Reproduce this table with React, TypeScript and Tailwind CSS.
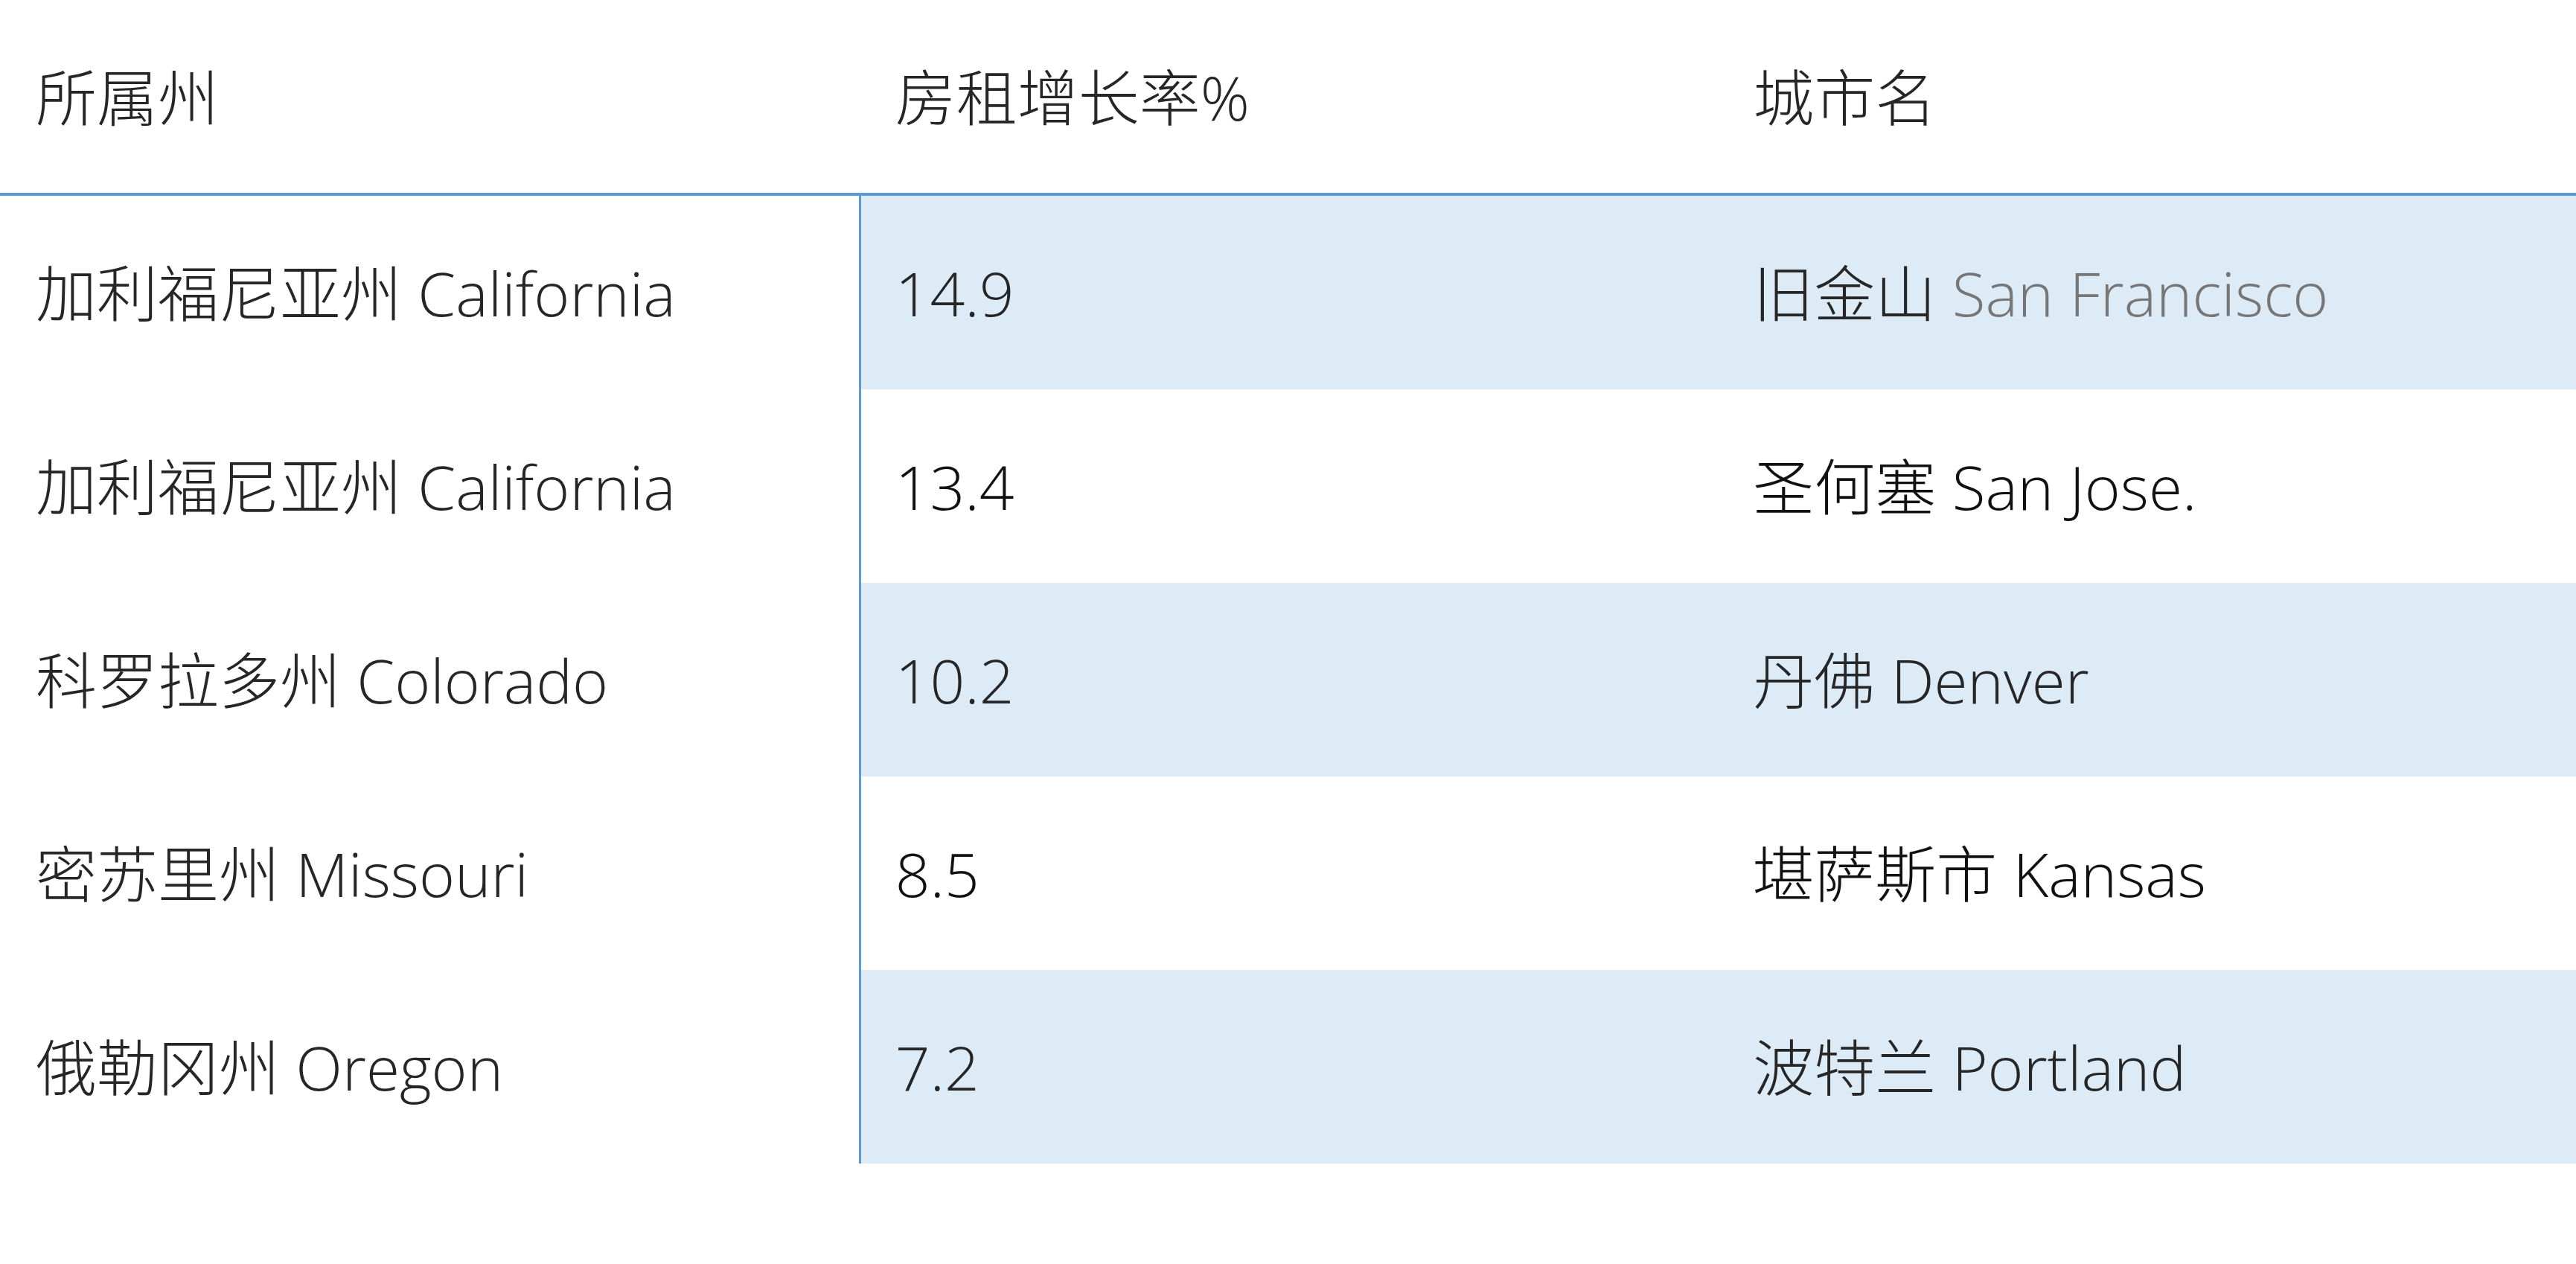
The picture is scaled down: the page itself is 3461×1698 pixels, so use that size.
import React from 'react';

type Row = {
  state: string;
  stateEn: string;
  rate: string;
  city: string;
  cityEn: string;
  mutedEn?: boolean;
};

const rows: Row[] = [
  { state: '加利福尼亚州', stateEn: 'California', rate: '14.9', city: '旧金山', cityEn: 'San Francisco', mutedEn: true },
  { state: '加利福尼亚州', stateEn: 'California', rate: '13.4', city: '圣何塞', cityEn: 'San Jose.' },
  { state: '科罗拉多州', stateEn: 'Colorado', rate: '10.2', city: '丹佛', cityEn: 'Denver' },
  { state: '密苏里州', stateEn: 'Missouri', rate: '8.5', city: '堪萨斯市', cityEn: 'Kansas' },
  { state: '俄勒冈州', stateEn: 'Oregon', rate: '7.2', city: '波特兰', cityEn: 'Portland' },
];

export default function App() {
  return (
    <div
      className="w-[3461px] h-[1698px] bg-white text-[#262626] text-[82px] font-light leading-none"
      style={{ fontFamily: '"Open Sans", "Noto Sans CJK SC", sans-serif' }}
    >
      {/* Header */}
      <div className="grid grid-cols-3 h-[263px] border-b-4 border-[#5b9bd5]">
        <div className="flex items-center pl-12">所属州</div>
        <div className="flex items-center pl-[49px]">房租增长率%</div>
        <div className="flex items-center pl-12">城市名</div>
      </div>

      {/* Body */}
      {rows.map((row, idx) => {
        const striped = idx % 2 === 0;
        // white rows render a touch darker in the reference
        const tone = striped ? 'bg-[#ddebf7]' : 'bg-white text-[#111111]';
        return (
          <div key={idx} className="grid grid-cols-3 h-[260px]">
            <div className="flex items-center pl-12 whitespace-nowrap">
              {row.state} {row.stateEn}
            </div>
            <div className={`flex items-center pl-[46px] border-l-[3px] border-[#5b9bd5] ${tone}`}>
              {row.rate}
            </div>
            <div className={`flex items-center pl-12 whitespace-nowrap ${tone}`}>
              {row.city}&nbsp;
              <span className={row.mutedEn ? 'text-[#767676]' : ''}>{row.cityEn}</span>
            </div>
          </div>
        );
      })}
    </div>
  );
}
